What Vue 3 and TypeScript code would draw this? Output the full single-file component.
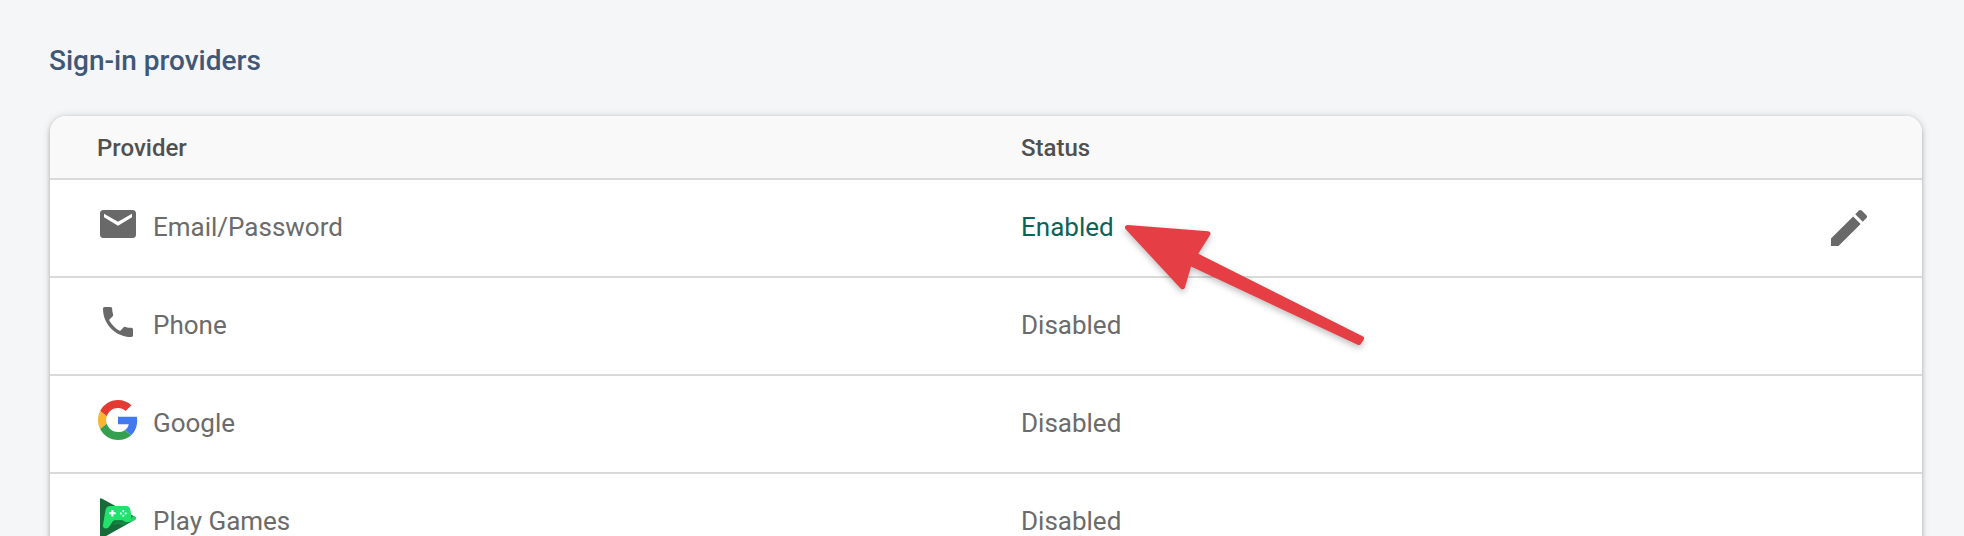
<script setup lang="ts">
interface Provider {
  id: 'email' | 'phone' | 'google' | 'games'
  name: string
  enabled: boolean
}

const providers: Provider[] = [
  { id: 'email', name: 'Email/Password', enabled: true },
  { id: 'phone', name: 'Phone', enabled: false },
  { id: 'google', name: 'Google', enabled: false },
  { id: 'games', name: 'Play Games', enabled: false },
]
</script>

<template>
  <main class="page">
    <h2 class="title">Sign-in providers</h2>
    <section class="card">
      <div class="head">
        <span class="col-name">Provider</span>
        <span>Status</span>
      </div>
      <div v-for="p in providers" :key="p.id" class="row">
        <div class="col-name">
          <svg v-if="p.id === 'email'" class="icon" viewBox="0 0 40 40">
            <path fill="#696969" fill-rule="evenodd" d="M5.500 6h29A3.500 3.500 0 0 1 38 9.500v21a3.500 3.500 0 0 1-3.500 3.500h-29A3.500 3.500 0 0 1 2 30.500v-21A3.500 3.500 0 0 1 5.500 6zM6 9.800v3.500l14 8.500 14-8.500V9.800l-14 8z" />
          </svg>
          <svg v-else-if="p.id === 'phone'" class="icon" viewBox="0 0 24 24">
            <path fill="#696969" d="M6.620 10.790c1.440 2.830 3.760 5.140 6.590 6.590l2.200-2.200c.27-.27.67-.36 1.020-.24 1.120.37 2.330.57 3.570.57.55 0 1 .45 1 1V20c0 .55-.45 1-1 1C10.610 21 3 13.390 3 4c0-.55.450-1 1-1h3.500c.55 0 1 .45 1 1 0 1.250.2 2.450.57 3.570.11.35.03.74-.25 1.020l-2.200 2.200z" />
          </svg>
          <svg v-else-if="p.id === 'google'" class="icon" viewBox="0 0 48 48">
            <path fill="#e33b34" d="M24 9.500c3.540 0 6.710 1.220 9.210 3.600l6.850-6.850C35.900 2.380 30.470 0 24 0 14.620 0 6.510 5.380 2.560 13.220l7.980 6.190C12.430 13.720 17.740 9.500 24 9.500z" />
            <path fill="#4179ee" d="M46.980 24.550c0-1.570-.15-3.090-.38-4.550H24v9.020h12.940c-.58 2.960-2.260 5.480-4.780 7.180l7.730 6c4.510-4.180 7.090-10.360 7.090-17.650z" />
            <path fill="#f8b52f" d="M10.530 28.590c-.48-1.450-.76-2.990-.76-4.590s.27-3.140.76-4.590l-7.980-6.190C.92 16.460 0 20.120 0 24c0 3.880.92 7.540 2.560 10.780l7.970-6.190z" />
            <path fill="#34a04f" d="M24 48c6.480 0 11.930-2.130 15.890-5.810l-7.730-6c-2.150 1.450-4.920 2.300-8.160 2.300-6.260 0-11.570-4.220-13.470-9.910l-7.980 6.190C6.510 42.620 14.620 48 24 48z" />
          </svg>
          <svg v-else class="icon" viewBox="0 0 40 40">
            <path fill="#166b38" d="M2 1.200Q2-.4 3.700.4L37 18.800Q39 20.300 37 21.700L3.700 40.500Q2 41 2 39z" />
            <path fill="#108a43" d="M14 27L17 23.500H30L26.500 27.600 20 26z" />
            <path fill="#1fd865" d="M35 17.700l2 1.100Q39 20.300 37 21.700L31.500 24.800Z" />
            <path fill="#24e06d" d="M12.500 8H28C31 8 32 10 32.400 12L33.600 19.500C34 23 31.500 24.600 29 24.200 26.500 24 25.500 22.300 23.500 22.300H17C14.500 22.300 12.800 27.500 10.500 29.500 8 31.600 4.600 30.500 5 27L7.300 13C7.700 10 9.500 8 12.500 8z" />
            <path fill="#fff" d="M13.400 12h2v2.300h2.300v2h-2.300v2.300h-2v-2.300h-2.300v-2h2.300zM25.300 11.700l1.300 1.300-1.300 1.300-1.300-1.300zM25.300 16.500l1.300 1.300-1.300 1.300-1.300-1.300zM22.900 14.100l1.300 1.300-1.300 1.300-1.300-1.300zM27.700 14.100l1.300 1.300-1.300 1.300-1.300-1.300z" />
          </svg>
          <span class="name">{{ p.name }}</span>
        </div>
        <span class="status" :class="{ enabled: p.enabled }">{{ p.enabled ? 'Enabled' : 'Disabled' }}</span>
        <svg v-if="p.enabled" class="edit" viewBox="0 0 24 24">
          <path fill="#696969" d="M3 17.250V21h3.750L17.810 9.940l-3.750-3.750L3 17.250zM20.710 7.040c.39-.39.39-1.020 0-1.410l-2.340-2.340c-.39-.39-1.020-.39-1.410 0l-1.830 1.830 3.750 3.750 1.830-1.830z" />
        </svg>
      </div>
    </section>
    <svg class="arrow" viewBox="0 0 260 140">
      <path d="M17.500 17.500L98 23.700 84.700 44.700 251.500 128.500 248.700 132.500 79.500 53 72.500 76.800Z" />
    </svg>
  </main>
</template>

<style scoped>
.page {
  position: relative;
  box-sizing: border-box;
  height: 536px;
  padding: 41px 42px 0 50px;
  overflow: hidden;
  background: #f4f6f8;
  font-family: Roboto, "Liberation Sans", sans-serif;
}
.title {
  margin: 0 0 35px -1px;
  color: #3f5878;
  font-size: 28px;
  font-weight: 500;
  line-height: 40px;
}
.card {
  height: 600px;
  overflow: hidden;
  border-radius: 16px;
  background: #fff;
  box-shadow: 0 2px 4px rgba(0, 0, 0, 0.22), 0 0 8px rgba(0, 0, 0, 0.14);
}
.head,
.row {
  display: flex;
  align-items: center;
  box-sizing: border-box;
  border-bottom: 2px solid #dadada;
}
.head {
  height: 64px;
  padding: 2px 48px 0 47px;
  background: #f9f9f9;
  color: #505050;
  font-size: 24px;
  font-weight: 500;
}
.row {
  height: 98px;
  padding: 0 49px 0 48px;
  color: #6b6b6b;
  font-size: 26px;
}
.col-name {
  display: flex;
  flex: 0 0 923px;
  align-items: center;
}
.head .col-name {
  flex-basis: 924px;
}
.name,
.status {
  padding-bottom: 2px;
}
.icon {
  width: 40px;
  height: 40px;
  margin: 0 15px 8px 0;
  overflow: visible;
}
.enabled {
  color: #0b6355;
}
.edit {
  width: 48px;
  height: 48px;
  margin-left: auto;
}
.arrow {
  position: absolute;
  top: 210px;
  left: 1110px;
  width: 260px;
  height: 140px;
  overflow: visible;
  fill: #e53f45;
  stroke: #e53f45;
  stroke-width: 5px;
  stroke-linejoin: round;
  filter: drop-shadow(0 3px 3px rgba(0, 0, 0, 0.25));
}
</style>

<style>
body {
  margin: 0;
  background: #f4f6f8;
}
</style>
